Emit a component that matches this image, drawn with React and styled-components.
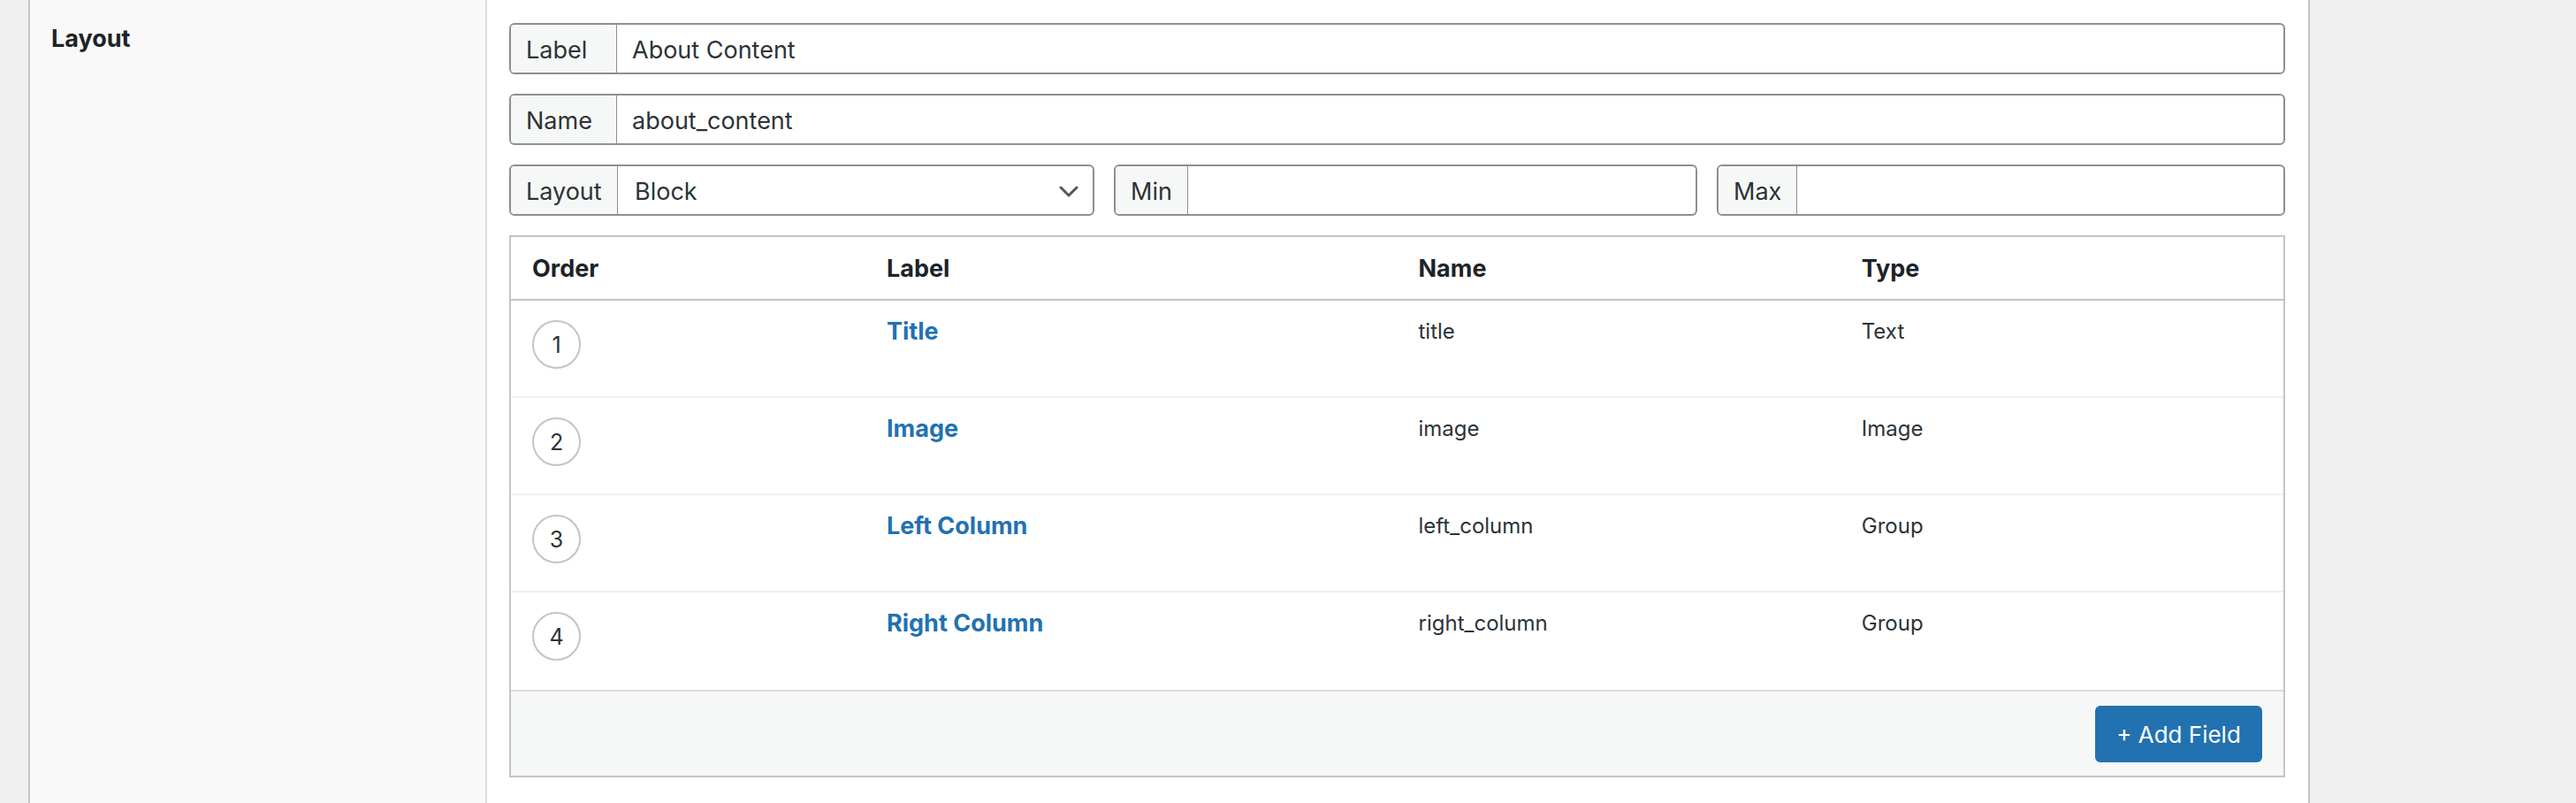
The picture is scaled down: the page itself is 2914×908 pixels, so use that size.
import styled, { createGlobalStyle } from "styled-components";

const GlobalStyle = createGlobalStyle`
    * {
        box-sizing: border-box;
    }

    body {
        margin: 0;
        background-color: #f0f0f1;
        font-family: Inter, Roboto, "Liberation Sans", sans-serif;
        color: #2c3338;
    }
`;

const PageStyle = styled.div`
    display: flex;
    min-height: 100vh;
    padding-left: 32px;
`;

const SideCellStyle = styled.div`
    width: 519px;
    background-color: #f9f9f9;
    border-left: 2px solid #c3c4c7;
    border-right: 2px solid #dcdcde;
    padding: 24px 24px;
    font-size: 27px;
    line-height: 40px;
    font-weight: 700;
    color: #1d2327;
`;

const MainCellStyle = styled.div`
    width: 2062px;
    background-color: #ffffff;
    border-right: 2px solid #c3c4c7;
    padding: 26px 26px 0 25px;
    display: flex;
    flex-direction: column;
    gap: 22px;
`;

const InputGroupStyle = styled.div`
    display: flex;
    height: 58px;
    border: 2px solid #8c8f94;
    border-radius: 6px;
    overflow: hidden;
    background-color: #ffffff;
`;

const AddonStyle = styled.span`
    display: flex;
    align-items: center;
    flex: none;
    width: ${(props) => (props.$width ? `${props.$width}px` : "auto")};
    padding: 2px 17px 0;
    background-color: #f6f7f7;
    border-right: 1px solid #8c8f94;
    font-size: 27px;
    color: #2c3338;
`;

const TextFieldStyle = styled.input`
    flex: 1;
    min-width: 0;
    border: none;
    outline: none;
    padding: 2px 17px 0;
    font-family: inherit;
    font-size: 27px;
    color: #2c3338;
    background: transparent;
`;

const SelectStyle = styled.div`
    flex: 1;
    display: flex;
    align-items: center;
    justify-content: space-between;
    padding: 2px 16px 0 19px;
    font-size: 27px;
    color: #2c3338;
`;

const LimitsRowStyle = styled.div`
    display: grid;
    grid-template-columns: 662px 660px 1fr;
    gap: 22px;
`;

const TableStyle = styled.div`
    border: 2px solid #c3c4c7;
    background-color: #ffffff;
`;

const RowStyle = styled.div`
    display: grid;
    grid-template-columns: 20% 30% 25% 25%;
`;

const HeaderRowStyle = styled(RowStyle)`
    height: 72px;
    align-items: center;
    border-bottom: 2px solid #c3c4c7;
`;

const HeaderCellStyle = styled.div`
    padding: 0 24px;
    font-size: 27px;
    font-weight: 700;
    color: #1d2327;
`;

const BodyRowStyle = styled(RowStyle)`
    height: 110px;
    align-items: start;

    &:not(:last-child) {
        border-bottom: 2px solid #f0f0f1;
    }
`;

const CellStyle = styled.div`
    padding: 15px 24px 0;
    font-size: 24px;
    line-height: 40px;
    color: #2c3338;
`;

const OrderBadgeStyle = styled.span`
    display: flex;
    align-items: center;
    justify-content: center;
    width: 55px;
    height: 55px;
    margin-top: 7px;
    border: 2px solid #c3c4c7;
    border-radius: 50%;
    font-size: 25px;
    color: #2c3338;
`;

const FieldLinkStyle = styled.a`
    font-size: 27px;
    font-weight: 700;
    color: #2271b1;
    text-decoration: none;
`;

const FooterStyle = styled.div`
    display: flex;
    justify-content: flex-end;
    padding: 16px 24px 15px;
    background-color: #f6f7f7;
    border-top: 2px solid #dcdcde;
`;

const ButtonStyle = styled.button`
    height: 64px;
    width: 189px;
    padding: 0;
    border: none;
    border-radius: 6px;
    background-color: #2271b1;
    color: #ffffff;
    font-family: inherit;
    font-size: 26px;
    cursor: pointer;
`;

const fields = [
    { order: 1, label: "Title", name: "title", type: "Text" },
    { order: 2, label: "Image", name: "image", type: "Image" },
    { order: 3, label: "Left Column", name: "left_column", type: "Group" },
    { order: 4, label: "Right Column", name: "right_column", type: "Group" },
];

function Chevron() {
    return (
        <svg width="22" height="13" viewBox="0 0 22 13" fill="none">
            <path
                d="M2 2 L11 11 L20 2"
                stroke="#50575e"
                strokeWidth="3"
                strokeLinecap="round"
                strokeLinejoin="round"
            />
        </svg>
    );
}

function App() {
    return (
        <>
            <GlobalStyle />
            <PageStyle>
                <SideCellStyle>Layout</SideCellStyle>

                <MainCellStyle>
                    <InputGroupStyle>
                        <AddonStyle $width={120}>Label</AddonStyle>
                        <TextFieldStyle defaultValue="About Content" readOnly />
                    </InputGroupStyle>

                    <InputGroupStyle>
                        <AddonStyle $width={120}>Name</AddonStyle>
                        <TextFieldStyle defaultValue="about_content" readOnly />
                    </InputGroupStyle>

                    <LimitsRowStyle>
                        <InputGroupStyle>
                            <AddonStyle $width={121}>Layout</AddonStyle>
                            <SelectStyle>
                                Block
                                <Chevron />
                            </SelectStyle>
                        </InputGroupStyle>
                        <InputGroupStyle>
                            <AddonStyle>Min</AddonStyle>
                            <TextFieldStyle defaultValue="" readOnly />
                        </InputGroupStyle>
                        <InputGroupStyle>
                            <AddonStyle>Max</AddonStyle>
                            <TextFieldStyle defaultValue="" readOnly />
                        </InputGroupStyle>
                    </LimitsRowStyle>

                    <TableStyle>
                        <HeaderRowStyle>
                            <HeaderCellStyle>Order</HeaderCellStyle>
                            <HeaderCellStyle>Label</HeaderCellStyle>
                            <HeaderCellStyle>Name</HeaderCellStyle>
                            <HeaderCellStyle>Type</HeaderCellStyle>
                        </HeaderRowStyle>

                        <div>
                            {fields.map((field) => (
                                <BodyRowStyle key={field.order}>
                                    <CellStyle>
                                        <OrderBadgeStyle>{field.order}</OrderBadgeStyle>
                                    </CellStyle>
                                    <CellStyle>
                                        <FieldLinkStyle href="#">{field.label}</FieldLinkStyle>
                                    </CellStyle>
                                    <CellStyle>{field.name}</CellStyle>
                                    <CellStyle>{field.type}</CellStyle>
                                </BodyRowStyle>
                            ))}
                        </div>

                        <FooterStyle>
                            <ButtonStyle>+ Add Field</ButtonStyle>
                        </FooterStyle>
                    </TableStyle>
                </MainCellStyle>
            </PageStyle>
        </>
    );
}

export default App;
